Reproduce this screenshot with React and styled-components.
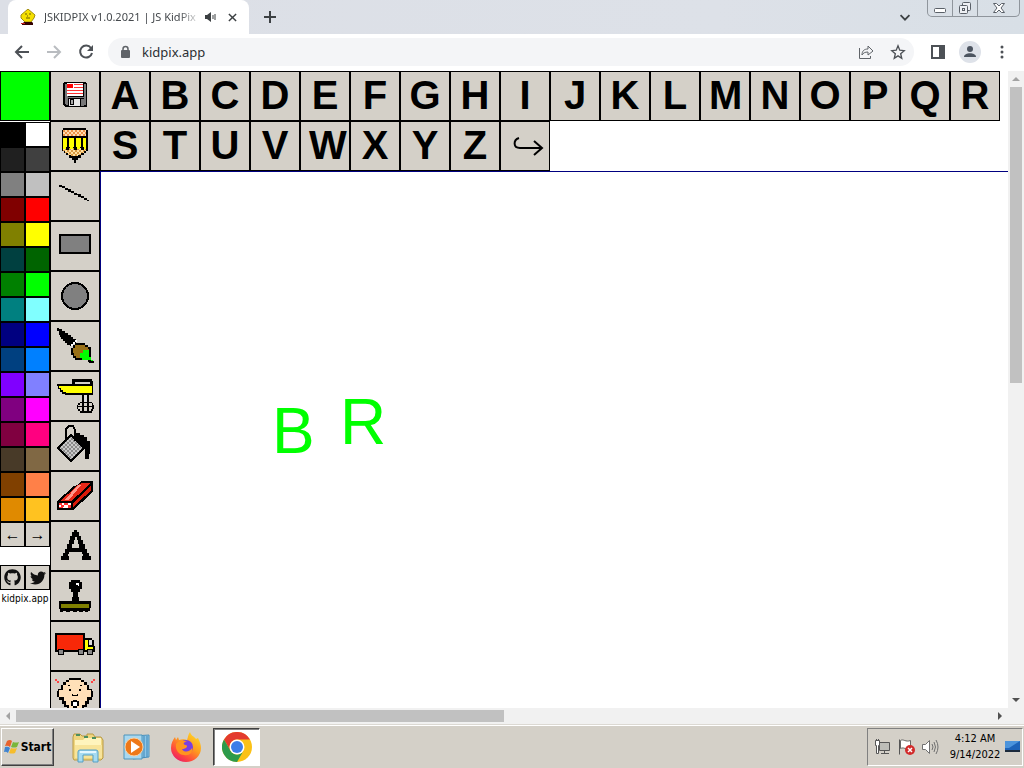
import React from 'react';
import styled, { createGlobalStyle } from 'styled-components';
import { FaGithub, FaTwitter } from 'react-icons/fa';

const GlobalStyle = createGlobalStyle`
  * { box-sizing: border-box; }
  body { margin: 0; overflow: hidden; }
  button { margin: 0; padding: 0; border: 0; background: none; color: inherit; font: inherit; }
  svg { display: block; flex: none; }
`;

const ui = '"DejaVu Sans Condensed", "DejaVu Sans", sans-serif';
const face = '#d4d0c8';

const Desktop = styled.div`
  display: flex;
  flex-direction: column;
  height: 100vh;
  background: #fff;
  font-family: ${ui};
  color: #000;
`;

/* ---------- browser chrome ---------- */

const TabStrip = styled.header`
  display: flex;
  height: 34px;
  padding-left: 8px;
  background: linear-gradient(90deg, #dcdfe6, #dde1e8 70%, #d8dfe6);
`;

const Tab = styled.div`
  display: flex;
  align-items: center;
  width: 241px;
  padding: 0 2px 0 12px;
  border-radius: 8px 8px 0 0;
  background: #fff;
`;

const TabTitle = styled.span`
  flex: 1;
  margin: 0 4px 0 8px;
  white-space: nowrap;
  font: 11px/16px "Noto Sans", sans-serif;
  color: #45494d;
  mask-image: linear-gradient(90deg, #000 86%, transparent);
`;

const IconButton = styled.button`
  display: flex;
  align-items: center;
  justify-content: center;
  width: ${(p) => p.$w || 32}px;
  height: ${(p) => p.$h || 32}px;
  border-radius: 14px;
  background: ${(p) => p.$bg || 'transparent'};
`;

const Spacer = styled.div`
  flex: 1;
`;

const WindowButtons = styled.div`
  display: flex;
  height: 17px;
  margin: 0 4px 0 6px;
  border: 1px solid #8f959c;
  border-top: 0;
  border-radius: 0 0 5px 5px;
`;

const WindowButton = styled.button`
  display: flex;
  align-items: center;
  justify-content: center;
  width: ${(p) => p.$w}px;
  & + & { border-left: 1px solid #8f959c; }
`;

const Toolbar = styled.div`
  display: flex;
  align-items: center;
  height: 37px;
  padding: 0 6px 2px 6px;
  background: #fff;
`;

const AddressBar = styled.div`
  display: flex;
  flex: 1;
  align-items: center;
  height: 28px;
  margin: 0 8px 0 6px;
  padding-left: 12px;
  border-radius: 14px;
  background: #f4f5f7;
`;

const AddressInput = styled.input`
  flex: 1;
  min-width: 0;
  margin-left: 10px;
  padding: 0;
  border: 0;
  outline: 0;
  background: transparent;
  font: 13px/20px "Noto Sans", sans-serif;
  color: #2b2f33;
`;

/* ---------- page ---------- */

const Viewport = styled.div`
  display: flex;
  flex: 1;
  min-height: 0;
`;

const Page = styled.main`
  display: flex;
  flex: 1;
  min-width: 0;
  overflow: hidden;
  background: #fff;
`;

const Side = styled.aside`
  display: flex;
  flex: none;
  flex-direction: column;
  width: 50px;
`;

const CurrentColor = styled.div`
  height: 50px;
  margin-bottom: 1px;
  border: 1px solid #000;
  background: #00ff00;
`;

const Palette = styled.div`
  display: grid;
  grid-template-columns: repeat(2, 25px);
  grid-auto-rows: 25px;
  margin-bottom: ${(p) => p.$gap || 0}px;
`;

const Swatch = styled.button`
  border: 1px solid #000;
  background: ${(p) => p.$color};
`;

const SmallTile = styled.button`
  display: flex;
  align-items: center;
  justify-content: center;
  border: 1px solid #000;
  background: ${face};
  font: 16px/20px "Liberation Sans", sans-serif;
`;

const SmallLink = styled(SmallTile).attrs({ as: 'a' })`
  color: #111;
`;

const SiteLink = styled.a`
  font: 10px/18px ${ui};
  text-align: center;
  text-decoration: none;
  color: #000;
`;

const Tile = styled.button`
  display: flex;
  flex: none;
  align-items: center;
  justify-content: safe center;
  width: 50px;
  height: 50px;
  overflow: hidden;
  border: 1px solid #000;
  background: ${face};
`;

const LetterTile = styled(Tile)`
  padding: 0 8px 2px 8px;
  font: bold 40px/46px "Liberation Sans", sans-serif;
`;

const ArrowTile = styled(Tile)`
  padding-left: 6px;
`;

const Work = styled.section`
  display: flex;
  flex: 1;
  flex-direction: column;
  min-width: 0;
`;

const Options = styled.div`
  display: flex;
  flex-wrap: wrap;
`;

const Canvas = styled.div`
  position: relative;
  flex: 1;
  border-top: 1px solid #000080;
  border-left: 1px solid #000080;
`;

const Stamp = styled.span`
  position: absolute;
  left: ${(p) => p.$x}px;
  top: ${(p) => p.$y}px;
  font: 64px/64px "Liberation Sans", sans-serif;
  color: #00ff00;
`;

const ScrollV = styled.div`
  display: flex;
  flex-direction: column;
  align-items: center;
  justify-content: space-between;
  width: 16px;
  background: #f1f1f1;
`;

const ScrollH = styled.div`
  display: flex;
  align-items: center;
  height: 16px;
  background: #f1f1f1;
`;

const ScrollArrow = styled.button`
  display: flex;
  align-items: center;
  justify-content: center;
  width: 16px;
  height: 16px;
`;

const ScrollTrack = styled.div`
  display: flex;
  flex: 1;
  flex-direction: ${(p) => (p.$vertical ? 'column' : 'row')};
`;

const ScrollThumb = styled.div`
  flex: 0 0 ${(p) => p.$size};
  width: ${(p) => (p.$vertical ? '12px' : 'auto')};
  height: ${(p) => (p.$vertical ? 'auto' : '12px')};
  background: #c1c1c1;
`;

/* ---------- taskbar ---------- */

const Taskbar = styled.footer`
  display: flex;
  align-items: center;
  height: 44px;
  padding: 1px 1px 0 1px;
  border-top: 1px solid #dcd9d3;
  background: ${face};
  box-shadow: inset 0 1px 0 #fff;
`;

const StartButton = styled.button`
  display: flex;
  align-items: center;
  justify-content: center;
  gap: 1px;
  width: 53px;
  height: 38px;
  margin-right: 10px;
  border: 1px solid;
  border-color: #fff #404040 #404040 #fff;
  box-shadow: inset -1px -1px 0 #808080;
  font: bold 12px/16px ${ui};
`;

const TaskButton = styled.button`
  display: flex;
  align-items: center;
  justify-content: center;
  width: 47px;
  height: 38px;
  margin-right: 2px;
  margin-left: ${(p) => (p.$active ? '2px' : '0')};
  border: ${(p) => (p.$active ? '1px solid' : '0')};
  border-color: #404040 #fff #fff #404040;
  background: ${(p) => (p.$active ? '#fff' : 'transparent')};
  box-shadow: ${(p) => (p.$active ? 'inset 1px 1px 0 #808080' : 'none')};
`;

const Tray = styled.div`
  display: flex;
  align-items: center;
  height: 38px;
  padding: 0 2px 0 6px;
  border: 1px solid;
  border-color: #808080 #fff #fff #808080;
`;

const TrayIcons = styled.div`
  display: flex;
  gap: 6px;
`;

const Clock = styled.time`
  width: 58px;
  margin-left: 6px;
  font: 11px/16px ${ui};
  text-align: center;
  white-space: nowrap;
`;

/* ---------- data ---------- */

const colors = [
  '#000000', '#ffffff', '#202020', '#404040', '#808080', '#c0c0c0', '#800000', '#ff0000',
  '#808000', '#ffff00', '#004040', '#006400', '#008000', '#00ff00', '#008080', '#80ffff',
  '#000080', '#0000ff', '#004080', '#0080ff', '#8000ff', '#8080ff', '#800080', '#ff00ff',
  '#800040', '#ff0080', '#483a28', '#806844', '#804000', '#ff8048', '#e08a00', '#ffc220',
];
const letters = 'ABCDEFGHIJKLMNOPQRSTUVWXYZ'.split('');

/* ---------- icons ---------- */

const ToolSvg = ({ children }) => (
  <svg width="48" height="48" viewBox="0 0 48 48" shapeRendering="crispEdges" aria-hidden="true" fill="none">
    {children}
  </svg>
);

const checker = (id, a, b) => (
  <pattern id={id} width="4" height="4" patternUnits="userSpaceOnUse">
    <rect width="4" height="4" fill={a} />
    <path d="M0 0h2v2H0zM2 2h2v2H2z" fill={b} />
  </pattern>
);

const tools = [
  ['Save', (
    <>
      <path d="M13 10h22v1h1v24H14v-1h-1v-1h-1V11h1z" fill="#000" />
      <path d="M14 12h3v13h16V12h2v21H15v-1h-1z" fill="#777" />
      <path d="M16 11h16v13H16z" fill="#fff" />
      <path d="M16 12h6v4h-6z" fill="#f00" />
      <path d="M23 12h9v1h-9zM23 15h9v1h-9zM16 18h16v1H16zM16 21h16v1H16z" fill="#f33" />
      <path d="M17 26h16v8H17z" fill="#000" />
      <path d="M18 27h11v7H18z" fill="#e8e8e8" />
      <path d="M19 27h4v6h-4z" fill="#000" />
      <path d="M20 28h2v4h-2z" fill="#aaa" />
      <path d="M30 27h3v7h-3z" fill="#777" />
    </>
  )],
  ['Pencil', (
    <>
      {checker('eraserTop', '#ffdcae', '#ee9348')}
      {checker('wood', '#ffe0a0', '#d89840')}
      <path d="M12 6h23v2h2v21h-2v2h-2v2h-3v3h-3v2h-2v3h-2v-3h-2v-2h-3v-3h-3v-2h-2v-2h-2V8h1z" fill="#000" />
      <path d="M12 8h23v6H12z" fill="url(#eraserTop)" />
      <path d="M12 29v-3h3v2h3v-2h5v2h3v-2h4v2h3v-2h2v3h-2v2h-3v2h-3v1h-7v-1h-3v-2h-3v-2z" fill="url(#wood)" />
      <path d="M12 16h4v9h-1v2h-3zM18 16h5v9h-1v2h-3v-2h-1zM25 16h5v9h-1v2h-3v-2h-1zM32 16h3v11h-2v-2h-1z" fill="#ff0" />
    </>
  )],
  ['Line', <path d="M8 13h3v1h3v2h3v1h3v2h3v2h3v1h4v2h3v2h3v2h2v1h-2v-1h-3v-2h-3v-1h-3v-2h-4v-2h-3v-1h-3v-2h-3v-2h-3v-1h-3z" fill="#000" />],
  ['Rectangle', <path d="M9 13h30v18H9z" fill="#808080" stroke="#000" strokeWidth="2" />],
  ['Oval', <circle cx="24" cy="24" r="13" fill="#808080" stroke="#000" strokeWidth="2" />],
  ['Wacky Brush', (
    <>
      <path d="M6 6h2v1h3v2h3v2h3v2h3v2h2v2h3v4h-3v3h-3v-1h-3v-2h-2v-2h-2v-2h-2v-2h-1v-2H8V9H6z" fill="#000" />
      <path d="M24 18h2v2h-2v2h-2v2h-2v-2h2v-2h2z" fill="#fff" />
      <path d="M24 21h10v2h3v2h3v12h-3v1H24v-2h-2v-3h-2v-7h2v-3h2z" fill="#000" />
      <path d="M24 23h10v2h3v2h1v8h-3v1H25v-2h-2v-3h-1v-5h2z" fill="#987018" />
      <path d="M32 28h6v7h2v3h2v2h-5v-2h-6v-2h-2v-5h3z" fill="#0f0" />
      <path d="M37 38h3v1h3v2h-5v-1h-1z" fill="#000" />
    </>
  )],
  ['Electric Mixer', (
    <>
      <path d="M21 7h20v2h1v14H14v-1h-3v-2H9v-3H7v-3H6v-2h15z" fill="#000" />
      <path d="M24 10h15v2H24z" fill={face} />
      <path d="M8 14h33v7H15v-1h-3v-2h-2v-2H8z" fill="#ff0" />
      <path d="M31 23h2v18h-2zM36 23h2v18h-2zM29 30h12v1H29zM27 31h2v2h-2v4h-1v-4h1zM41 31h1v2h1v4h-1v2h-2v-2h1zM27 37h2v2h-2zM29 39h12v2H29zM27 34h15v1H27z" fill="#000" />
      <path d="M33 23h3v7h-3z" fill="#ddd" />
    </>
  )],
  ['Paint Can', (
    <>
      <pattern id="metal" width="4" height="4" patternUnits="userSpaceOnUse">
        <path d="M0 0h4v4H0z" fill="#c8c8c8" />
        <path d="M0 0h2v2H0zM2 2h2v2H2z" fill="#8a8a8a" />
      </pattern>
      <path d="M7 26L20 13l13 13-13 13z" fill="url(#metal)" stroke="#000" strokeWidth="2" />
      <path d="M15 18V7l3-3h4l2 4v11" stroke="#000" strokeWidth="2" />
      <path d="M24 11h5v2h4v2h3v4h3v13h-1v5h-4V27h-2v-3l-8-8z" fill="#000" />
    </>
  )],
  ['Eraser', (
    <>
      <path d="M6 30l5-6 5-3 5-6 5-2 4-4h12v10l-5 5-6 6-5 4-4 4H6z" fill="#000" />
      <path d="M9 29l5-5 5-3 5-6 5-3 2-1h8L27 23l-7 6z" fill="#e82818" />
      <path d="M13 28l7-7 7-8h3L18 28z" fill="#ff988c" />
      <path d="M22 31l8-8 10-10v5l-6 6-7 6-5 5z" fill="#d81808" />
      <path d="M8 31h12v5H8z" fill="#fff" />
      <path d="M8 31h3v2H8zM13 31h4v2h-4zM10 33h3v2h-3zM17 33h3v3h-3zM8 35h4v1H8z" fill="#f33" />
    </>
  )],
  ['Text', <path fillRule="evenodd" d="M23 8h3v2h2v4h2v4h2v4h2v5h2v4h2v3h2v4h-9v-4h1v-2h-1v-2H18v2h-1v2h1v4H10v-4h2v-3h2v-4h2v-5h2v-4h1v-4h2v-4h2zM24 15v3h-1v4h-2v4h7v-4h-1v-4h-1v-3z" fill="#000" />],
  ['Rubber Stamp', (
    <>
      <path d="M20 8h9v2h2v7h-2v3h-2v5h1v4h12v7h-1v3h-2v1h-3v-1h-2v1h-4v-1h-2v1h-4v-1h-3v1h-4v-1h-3v1h-3v-3H8v-8h13v-4h1v-5h-2v-3h-2v-7h2z" fill="#000" />
      <path d="M10 32h28v4H10z" fill="#808000" />
      <path d="M25 11h3v3h-1v-1h-2z" fill="#fff" />
    </>
  )],
  ['Moving Van', (
    <>
      <path d="M4 11h30v19H4z" fill="#000" />
      <path d="M6 13h26v15H6z" fill="#f82808" />
      <path d="M34 16h7v2h2v6h1v6H34z" fill="#000" />
      <path d="M34 18h3v7h5v3h-8z" fill="#ff0" />
      <path d="M38 18h3v5h-3z" fill="#ddd" />
      <path d="M4 28h40v2H4z" fill="#000" />
      {[10, 30, 39].map((x) => <circle key={x} cx={x} cy="30" r="3" fill="#888" stroke="#000" strokeWidth="1" />)}
    </>
  )],
  ['Undo Guy', (
    <>
      <path d="M18 6h12v2h3v2h3v3h2v4h3v2h1v6h-1v3h-3v4h-2v3h-3v3h-4v2h-9v-2h-4v-3h-3v-3h-2v-4H8v-3H6v-6h1v-2h3v-4h2v-3h3V8h3z" fill="#000" />
      <path d="M18 8h12v2h3v3h3v5h4v7h-4v4h-2v4h-3v3H18v-3h-3v-4h-2v-4H8v-7h4v-5h3v-3h3z" fill="#ffe0b8" />
      <path d="M17 13h2v1h-2zM29 13h2v1h-2zM18 17h2v2h-2zM28 17h2v2h-2zM21 22h1v1h4v-1h1v2h-6zM22 28h4v1h2v5h-2v2h-4v-2h-2v-5h2z" fill="#000" />
      <path d="M22 30h4v4h-4z" fill="#fff" />
      <path d="M4 7h2v2h2v2H6V9H4zM42 7h2v2h-2v2h-2V9h2z" fill="#f44" />
    </>
  )],
];

const Stroke = ({ d, size = 18, color = '#4d5156', width = 2 }) => (
  <svg width={size} height={size} viewBox="0 0 18 18" fill="none" stroke={color} strokeWidth={width} aria-hidden="true">
    <path d={d} />
  </svg>
);

const Triangle = ({ d, color }) => (
  <svg width="8" height="8" viewBox="0 0 8 8" aria-hidden="true"><path d={d} fill={color} /></svg>
);

const Favicon = () => (
  <svg width="16" height="16" viewBox="0 0 16 16" aria-hidden="true">
    <path d="M8 0l7 6-1 3-3 4H5L1 9V6z" fill="#f5e000" stroke="#a08c10" strokeWidth="1" />
    <path d="M5 5h2M9 5h2M6 9h4M7 7h1" stroke="#6b5b00" />
    <path d="M4 13h8l1 1v2H2v-1z" fill="#300" /><path d="M1 14h4v1H1z" fill="#c22" />
  </svg>
);

const Explorer = () => (
  <svg width="34" height="32" viewBox="0 0 34 32" aria-hidden="true">
    <path d="M2 6l1-3h6l2 2h5V3h6l2 3h6l2 3v18l-2 2H3l-1-2z" fill="#efd57e" stroke="#b99a43" />
    <path d="M4 9h8l2-2h16v19H4z" fill="#fff4bd" />
    <path d="M4 14h27v13H4z" fill="#f8e49a" />
    <path d="M5 4h4M13 6h4M21 7h4" stroke="#4c8f60" strokeWidth="2" />
    <path d="M7 31V21q0-2 2-2h16q2 0 2 2v10h-5v-7H12v7z" fill="#a6dbf1" stroke="#559fc4" />
    <path d="M9 21h16" stroke="#e4f7ff" strokeWidth="2" />
  </svg>
);

const MediaPlayer = () => (
  <svg width="28" height="26" viewBox="0 0 28 26" aria-hidden="true">
    <path d="M10 2l16-1v22l-16 2z" fill="#8cc6e8" stroke="#4b91bd" />
    <path d="M21 2v22M24 2v21" stroke="#3f86b5" />
    <path d="M1 1h18v24H1z" fill="#a8d8f0" stroke="#4d94bb" />
    <circle cx="11" cy="13" r="9" fill="#ee7818" stroke="#fbd0a0" />
    <path d="M8 7l9 6-9 6z" fill="#fff" />
  </svg>
);

const Firefox = () => (
  <svg width="32" height="32" viewBox="0 0 32 32" aria-hidden="true">
    <defs>
      <linearGradient id="ff" x1="0.9" y1="0" x2="0.2" y2="1">
        <stop offset="0" stopColor="#ffe226" /><stop offset=".45" stopColor="#ff9a1f" />
        <stop offset=".75" stopColor="#ff4a3d" /><stop offset="1" stopColor="#e8196c" />
      </linearGradient>
    </defs>
    <path d="M20 1c1 4 4 4 6 7l2-1c2 4 3 7 3 10a15 14 0 1 1-30 0c0-5 2-8 4-11l1 3 2-3 1 3c3-1 6-1 8 0 1-3 1-5 3-8z" fill="url(#ff)" />
    <circle cx="16" cy="16" r="7" fill="#7a3fe0" />
    <path d="M6 13c3-4 8-4 11-2-4 0-4 2-2 3 2 0 3 1 1 3-2 1-3 1-4 1 2 4 8 3 10-1 1 5-3 8-8 7-5 0-9-5-8-11z" fill="#ff9420" />
  </svg>
);

const Chrome = () => (
  <svg width="30" height="30" viewBox="0 0 30 30" aria-hidden="true">
    <circle cx="15" cy="15" r="15" fill="#fbc116" />
    <path d="M2 7.500A15 15 0 0 1 28 7.500H15a7.500 7.500 0 0 0-6.500 11.200z" fill="#e33b2e" />
    <path d="M2 7.500A15 15 0 0 0 15 30l6.500-11.200a7.500 7.500 0 0 1-13 0z" fill="#2d9b4b" />
    <circle cx="15" cy="15" r="7.500" fill="#fff" />
    <circle cx="15" cy="15" r="6" fill="#3b7de8" />
  </svg>
);

const WindowsFlag = () => (
  <svg width="16" height="16" viewBox="0 0 16 16" aria-hidden="true">
    <path d="M3 2q3-2 5 0L6 8q-2-2-5-1z" fill="#e8622c" />
    <path d="M9 3q3 1 6 0l-2 5q-3 1-6 0z" fill="#79b63c" />
    <path d="M1 8q3-1 5 1l-2 5q-2-2-4-1z" fill="#3f84d0" />
    <path d="M7 9q3 1 6 0l-2 5q-3 1-6 0z" fill="#f6bd2c" />
  </svg>
);

export default function App() {
  return (
    <Desktop>
      <GlobalStyle />
      <TabStrip>
        <Tab>
          <Favicon />
          <TabTitle>JSKIDPIX v1.0.2021 | JS KidPix</TabTitle>
          <svg width="12" height="12" viewBox="0 0 12 12" aria-hidden="true">
            <path d="M0 4h2l4-3v10L2 8H0z" fill="#3c4043" /><path d="M8 4v4M10 3v6" stroke="#3c4043" />
          </svg>
          <IconButton $w={30} $h={28} aria-label="Close tab"><Stroke size={13} d="M4 4l10 10M14 4L4 14" color="#3c4043" /></IconButton>
        </Tab>
        <IconButton $w={42} $h={34} aria-label="New tab"><Stroke d="M9 3v12M3 9h12" color="#3c4043" /></IconButton>
        <Spacer />
        <IconButton $w={32} $h={34} aria-label="Search tabs"><Stroke size={16} d="M4 7l5 5 5-5" color="#3c4043" /></IconButton>
        <WindowButtons>
          <WindowButton $w={24} aria-label="Minimize">
            <svg width="14" height="12" viewBox="0 0 14 12" fill="#fff" stroke="#5a6068"><rect x="1.500" y="6.500" width="11" height="4" rx="1" /></svg>
          </WindowButton>
          <WindowButton $w={25} aria-label="Restore">
            <svg width="14" height="14" viewBox="0 0 14 14" fill="#eef0f4" stroke="#5a6068"><rect x="4.500" y="1.500" width="8" height="8" rx="1" /><rect x="1.500" y="4.500" width="8" height="8" rx="1" /><rect x="4.500" y="7.500" width="2" height="2" /></svg>
          </WindowButton>
          <WindowButton $w={42} aria-label="Close">
            <svg width="14" height="12" viewBox="0 0 14 12" fill="#fff" stroke="#5a6068"><path d="M1.500 1.500h3L7 4l2.500-2.500h3L9 6l3.500 4.500h-3L7 8l-2.500 2.500h-3L5 6z" /></svg>
          </WindowButton>
        </WindowButtons>
      </TabStrip>

      <Toolbar>
        <IconButton aria-label="Back"><Stroke d="M16 9H3M9 3L3 9l6 6" /></IconButton>
        <IconButton aria-label="Forward"><Stroke d="M2 9h13M9 3l6 6-6 6" color="#b9bcc0" /></IconButton>
        <IconButton aria-label="Reload">
          <svg width="18" height="18" viewBox="0 0 18 18" aria-hidden="true">
            <path d="M14 5a6 6 0 1 0 1 5" fill="none" stroke="#4d5156" strokeWidth="2" /><path d="M16 2v6h-6z" fill="#4d5156" />
          </svg>
        </IconButton>
        <AddressBar>
          <svg width="12" height="14" viewBox="0 0 12 14" aria-hidden="true">
            <rect x="1" y="5" width="9" height="8" rx="1" fill="#5f6368" /><path d="M3 6V4a2.500 2.500 0 0 1 5 0v2" fill="none" stroke="#5f6368" strokeWidth="1.500" />
          </svg>
          <AddressInput aria-label="Address" defaultValue="kidpix.app" />
          <IconButton $h={28} aria-label="Share">
            <svg width="16" height="16" viewBox="0 0 16 16" fill="none" stroke="#5f6368" aria-hidden="true">
              <path d="M1.500 4v10.500h11V12M4 11c0-4 2-6 6-6V2l5 5-5 4V8c-3 0-5 1-6 3z" />
            </svg>
          </IconButton>
          <IconButton $h={28} aria-label="Bookmark"><Stroke size={16} width={1.500} d="M9 2l2 5 5 .5-4 3.500 1.200 5L9 13.300 4.800 16 6 11 2 7.500 7 7z" /></IconButton>
        </AddressBar>
        <IconButton aria-label="Side panel">
          <svg width="16" height="16" viewBox="0 0 16 16" aria-hidden="true"><path d="M2 2h12v12H2z" fill="#fff" stroke="#4d5156" strokeWidth="2" /><path d="M9 2h5v12H9z" fill="#4d5156" /></svg>
        </IconButton>
        <IconButton aria-label="Profile">
          <svg width="22" height="22" viewBox="0 0 22 22" aria-hidden="true"><circle cx="11" cy="11" r="11" fill="#dee2e9" /><circle cx="11" cy="8" r="3" fill="#4d5561" /><path d="M5 16c0-5 12-5 12 0z" fill="#4d5561" /></svg>
        </IconButton>
        <IconButton aria-label="Menu">
          <svg width="4" height="14" viewBox="0 0 4 14" fill="#4d5156" aria-hidden="true"><circle cx="2" cy="2" r="1.500" /><circle cx="2" cy="7" r="1.500" /><circle cx="2" cy="12" r="1.500" /></svg>
        </IconButton>
      </Toolbar>

      <Viewport>
        <Page>
          <Side>
            <CurrentColor />
            <Palette>
              {colors.map((c) => <Swatch key={c} $color={c} aria-label={c} />)}
            </Palette>
            <Palette $gap={18}>
              <SmallTile>←</SmallTile>
              <SmallTile>→</SmallTile>
            </Palette>
            <Palette>
              <SmallLink href="#github" aria-label="GitHub"><FaGithub size={17} /></SmallLink>
              <SmallLink href="#twitter" aria-label="Twitter"><FaTwitter size={16} /></SmallLink>
            </Palette>
            <SiteLink href="#home">kidpix.app</SiteLink>
          </Side>
          <Side as="nav">
            {tools.map(([name, art]) => (
              <Tile key={name} aria-label={name}><ToolSvg>{art}</ToolSvg></Tile>
            ))}
          </Side>
          <Work>
            <Options>
              {letters.map((l) => <LetterTile key={l}>{l}</LetterTile>)}
              <ArrowTile aria-label="Next letters">
                <svg width="32" height="24" viewBox="0 0 32 24" fill="none" stroke="#000" strokeWidth="2" aria-hidden="true">
                  <path d="M7 4C1 6 1 14 8 14h22M22 7l8 7-8 7" />
                </svg>
              </ArrowTile>
            </Options>
            <Canvas>
              <Stamp $x={171} $y={227}>B</Stamp>
              <Stamp $x={239} $y={218}>R</Stamp>
            </Canvas>
          </Work>
        </Page>
        <ScrollV>
          <ScrollArrow aria-label="Scroll up"><Triangle d="M0 6l4-4 4 4z" color="#a3a3a3" /></ScrollArrow>
          <ScrollTrack $vertical><ScrollThumb $vertical $size="49%" /></ScrollTrack>
          <ScrollArrow aria-label="Scroll down"><Triangle d="M0 2l4 4 4-4z" color="#505050" /></ScrollArrow>
        </ScrollV>
      </Viewport>
      <ScrollH>
        <ScrollArrow aria-label="Scroll left"><Triangle d="M6 0L2 4l4 4z" color="#a3a3a3" /></ScrollArrow>
        <ScrollTrack><ScrollThumb $size="50%" /></ScrollTrack>
        <ScrollArrow aria-label="Scroll right"><Triangle d="M2 0l4 4-4 4z" color="#505050" /></ScrollArrow>
        <ScrollArrow as="div" />
      </ScrollH>

      <Taskbar>
        <StartButton><WindowsFlag />Start</StartButton>
        <TaskButton aria-label="Explorer"><Explorer /></TaskButton>
        <TaskButton aria-label="Media Player"><MediaPlayer /></TaskButton>
        <TaskButton aria-label="Firefox"><Firefox /></TaskButton>
        <TaskButton $active aria-label="Chrome"><Chrome /></TaskButton>
        <Spacer />
        <Tray>
          <TrayIcons>
            <svg width="18" height="18" viewBox="0 0 18 18" aria-hidden="true">
              <path d="M5.500 4.500h10v8h-10z" fill="#bdbdb8" stroke="#555" /><path d="M7 15.500h8M10.500 13v2" stroke="#555" />
              <path d="M1.500 2.500h4v5h-1v8h-2v-8h-1z" fill="#fff" stroke="#555" /><path d="M2.500 1v2M4.500 1v2" stroke="#555" />
            </svg>
            <svg width="18" height="18" viewBox="0 0 18 18" aria-hidden="true">
              <path d="M1.500 1.500v15" stroke="#555" /><path d="M2.500 2.500c3-2 5 2 10 0v8c-5 2-6-2-10 0z" fill="#fff" stroke="#666" />
              <circle cx="12" cy="12" r="5" fill="#d22b2b" /><path d="M10 10l4 4M14 10l-4 4" stroke="#fff" strokeWidth="1.500" />
            </svg>
            <svg width="18" height="18" viewBox="0 0 18 18" fill="none" stroke="#707070" aria-hidden="true">
              <path d="M.5 6.500h3l4-4v13l-4-4h-3z" fill="#fff" /><path d="M10 6q2 3 0 6M12 4q3 5 0 10M14 2q4 7 0 14" />
            </svg>
          </TrayIcons>
          <Clock>4:12 AM<br />9/14/2022</Clock>
          <svg width="16" height="16" viewBox="0 0 16 16" aria-hidden="true">
            <path d="M1 2h15v10H1z" fill="#1e63b8" /><path d="M1 2h15L5 9H1z" fill="#4c94dc" /><path d="M1 11h15v2H1z" fill="#1b2a3c" />
          </svg>
        </Tray>
      </Taskbar>
    </Desktop>
  );
}
